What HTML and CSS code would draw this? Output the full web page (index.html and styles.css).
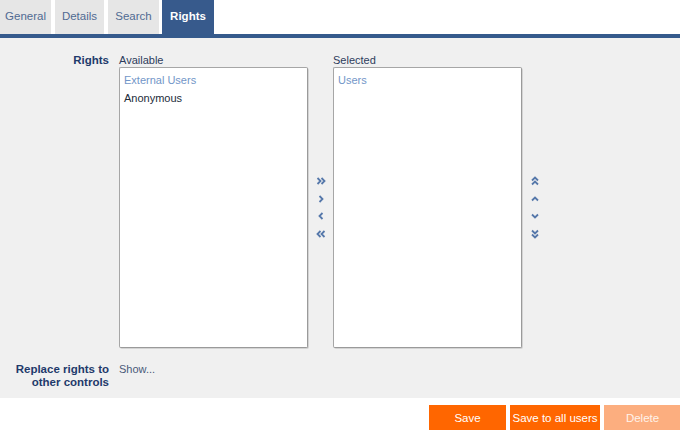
FILE: index.html
```html
<!DOCTYPE html>
<html>
<head>
<meta charset="utf-8">
<link rel="stylesheet" href="styles.css">
</head>
<body>
<div class="page">
  <nav class="tabs">
    <div class="tab">General</div>
    <div class="tab">Details</div>
    <div class="tab">Search</div>
    <div class="tab active">Rights</div>
  </nav>
  <div class="panel">
    <div class="row">
      <div class="label">Rights</div>
      <div class="field">
        <div class="lists">
          <div class="list-col">
            <div class="caption">Available</div>
            <div class="listbox">
              <div class="item group">External Users</div>
              <div class="item">Anonymous</div>
            </div>
          </div>
          <div class="arrows">
            <svg viewBox="0 0 10 10"><path d="M1.5 2 L4.5 5 L1.5 8 M5.5 2 L8.5 5 L5.5 8"/></svg>
            <svg viewBox="0 0 10 10"><path d="M3.5 2 L6.5 5 L3.5 8"/></svg>
            <svg viewBox="0 0 10 10"><path d="M6.5 2 L3.5 5 L6.5 8"/></svg>
            <svg viewBox="0 0 10 10"><path d="M4.5 2 L1.5 5 L4.5 8 M8.5 2 L5.5 5 L8.5 8"/></svg>
          </div>
          <div class="list-col">
            <div class="caption">Selected</div>
            <div class="listbox">
              <div class="item group">Users</div>
            </div>
          </div>
          <div class="arrows">
            <svg viewBox="0 0 10 10"><path d="M2 4.5 L5 1.5 L8 4.5 M2 8.5 L5 5.5 L8 8.5"/></svg>
            <svg viewBox="0 0 10 10"><path d="M2 6.5 L5 3.5 L8 6.5"/></svg>
            <svg viewBox="0 0 10 10"><path d="M2 3.5 L5 6.5 L8 3.5"/></svg>
            <svg viewBox="0 0 10 10"><path d="M2 1.5 L5 4.5 L8 1.5 M2 5.5 L5 8.5 L8 5.5"/></svg>
          </div>
        </div>
      </div>
    </div>
    <div class="row row2">
      <div class="label">Replace rights to other controls</div>
      <div class="field"><span class="link">Show...</span></div>
    </div>
  </div>
  <div class="actions">
    <button class="btn">Save</button>
    <button class="btn wide">Save to all users</button>
    <button class="btn disabled">Delete</button>
  </div>
</div>
</body>
</html>
```
FILE: styles.css
```css
html, body {
  margin: 0;
  padding: 0;
  background: #ffffff;
}
body {
  font-family: "Liberation Sans", Arial, sans-serif;
  font-size: 11px;
  color: #2d3a55;
}
.page {
  width: 680px;
  height: 430px;
  overflow: hidden;
}
.tabs {
  display: flex;
  gap: 4px;
  height: 34px;
  border-bottom: 4px solid #355a8c;
}
.tab {
  display: flex;
  align-items: center;
  justify-content: center;
  height: 34px;
  padding: 0 7px 2px;
  box-sizing: content-box;
  height: 32px;
  background: #e6e6e6;
  color: #506a92;
  font-size: 11.5px;
}
.tab:nth-child(1) { width: 37px; }
.tab:nth-child(2) { width: 35px; }
.tab:nth-child(3) { width: 37px; margin-right: -1px; }
.tab.active {
  width: 38px;
  background: #375a8c;
  color: #ffffff;
  font-weight: bold;
}
.panel {
  background: #f0f0f0;
  height: 360px;
  padding-top: 16px;
  box-sizing: border-box;
}
.row {
  display: flex;
  gap: 10px;
}
.label {
  width: 109px;
  text-align: right;
  font-weight: bold;
  font-size: 11.5px;
  color: #1f3a6b;
  line-height: 13px;
}
.field {
  flex: 1;
}
.lists {
  display: flex;
  align-items: flex-end;
}
.list-col {
  display: flex;
  flex-direction: column;
}
.caption {
  line-height: 13px;
  color: #2d3c5c;
}
.listbox {
  box-sizing: border-box;
  width: 189px;
  height: 281px;
  background: #ffffff;
  border: 1px solid #a6a6a6;
  border-right-color: #9a9a9a;
  border-bottom-color: #9a9a9a;
  border-radius: 2px;
  box-shadow: 1px 1px 0 #d4d4d4;
  padding: 3px 4px;
  line-height: 18px;
}
.item {
  color: #222b3a;
}
.item.group {
  color: #7296c8;
}
.arrows {
  width: 25px;
  height: 281px;
  display: flex;
  flex-direction: column;
  align-items: center;
  justify-content: center;
  gap: 7.5px;
}
.arrows svg {
  width: 10px;
  height: 10px;
  fill: none;
  stroke: #5678aa;
  stroke-width: 1.8;
}
.row2 {
  margin-top: 15px;
}
.link {
  color: #4a5a7a;
  line-height: 13px;
}
.actions {
  display: flex;
  justify-content: flex-end;
  gap: 4px;
  padding-top: 7px;
  margin-right: -1px;
}
.btn {
  height: 26px;
  width: 77px;
  border: none;
  background: #ff6600;
  color: #ffffff;
  font-family: "Liberation Sans", Arial, sans-serif;
  font-size: 11.5px;
  padding: 0;
}
.btn.wide { width: 90px; }
.btn.disabled { background: #fcae7f; color: #fff3ea; }
```
